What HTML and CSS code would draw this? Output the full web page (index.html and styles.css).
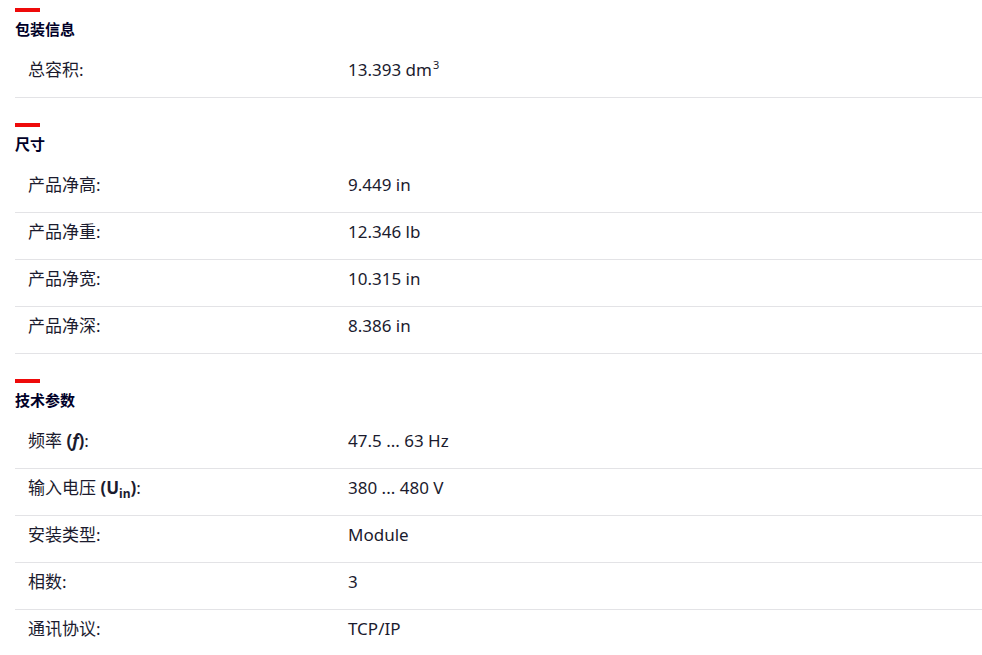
FILE: index.html
```html
<!DOCTYPE html>
<html lang="zh-CN">
<head>
<meta charset="utf-8">
<title>产品规格</title>
<link rel="stylesheet" href="styles.css">
</head>
<body>
<main class="specs">
  <section class="group">
    <div class="bar"></div>
    <h3 class="title">包装信息</h3>
    <dl class="rows">
      <div class="row"><dt class="label">总容积:</dt><dd class="value">13.393 dm<sup>3</sup></dd></div>
    </dl>
  </section>
  <section class="group">
    <div class="bar"></div>
    <h3 class="title">尺寸</h3>
    <dl class="rows">
      <div class="row"><dt class="label">产品净高:</dt><dd class="value">9.449 in</dd></div>
      <div class="row"><dt class="label">产品净重:</dt><dd class="value">12.346 lb</dd></div>
      <div class="row"><dt class="label">产品净宽:</dt><dd class="value">10.315 in</dd></div>
      <div class="row"><dt class="label">产品净深:</dt><dd class="value">8.386 in</dd></div>
    </dl>
  </section>
  <section class="group">
    <div class="bar"></div>
    <h3 class="title">技术参数</h3>
    <dl class="rows">
      <div class="row"><dt class="label">频率 <b>(<i>f</i>)</b>:</dt><dd class="value">47.5 ... 63 Hz</dd></div>
      <div class="row"><dt class="label">输入电压 <b>(U<sub>in</sub>)</b>:</dt><dd class="value">380 ... 480 V</dd></div>
      <div class="row"><dt class="label">安装类型:</dt><dd class="value">Module</dd></div>
      <div class="row"><dt class="label">相数:</dt><dd class="value">3</dd></div>
      <div class="row"><dt class="label">通讯协议:</dt><dd class="value">TCP/IP</dd></div>
    </dl>
  </section>
</main>
</body>
</html>
```
FILE: styles.css
```css
* { box-sizing: border-box; }
html, body { margin: 0; padding: 0; background: #ffffff; }
body {
  font-family: "Noto Sans", "Noto Sans CJK SC", sans-serif;
  color: #1b1b2e;
}
.specs {
  padding: 8px 0 0 15px;
}
.group + .group { margin-top: 25px; }
.bar {
  width: 25px;
  height: 4px;
  background: #ee0a0a;
}
.title {
  margin: 7px 0 0;
  font-size: 15px;
  line-height: 20px;
  font-weight: 700;
  color: #000028;
}
.rows {
  margin: 12px 0 0;
}
.row {
  display: flex;
  padding: 7px 0 15px;
  border-bottom: 1px solid #e3e3e6;
  font-size: 17px;
  line-height: 24px;
}
.label {
  width: 333px;
  flex: none;
  padding-left: 13px;
  margin: 0;
}
.value {
  margin: 0;
}
.value sup {
  font-size: 11px;
  line-height: 0;
  vertical-align: 7px;
  margin-left: 1px;
}
.label b { font-weight: 700; }
.label sub {
  font-size: 12px;
  line-height: 0;
  vertical-align: -4px;
}
```
